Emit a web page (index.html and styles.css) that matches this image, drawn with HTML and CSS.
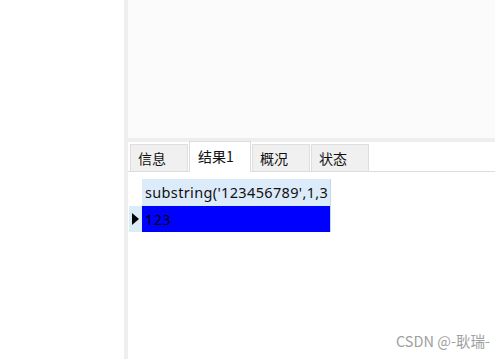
FILE: index.html
```html
<!DOCTYPE html>
<html>
<head>
<meta charset="utf-8">
<link rel="stylesheet" href="styles.css">
</head>
<body>
<div class="app">
  <div class="left"></div>
  <div class="divider"></div>
  <div class="right">
    <div class="top-pane"></div>
    <div class="hsep"></div>
    <div class="tabs">
      <div class="tab">信息</div>
      <div class="tab active">结果1</div>
      <div class="tab">概况</div>
      <div class="tab">状态</div>
    </div>
    <div class="grid">
      <div class="grid-row head">
        <div class="ind blank"></div>
        <div class="cell hcell">substring('123456789',1,3</div>
      </div>
      <div class="grid-row">
        <div class="ind"><svg width="7" height="12" viewBox="0 0 7 12"><polygon points="0,0 7,6 0,12" fill="#000"/></svg></div>
        <div class="cell sel">123</div>
      </div>
    </div>
    <div class="watermark">CSDN @-耿瑞-</div>
  </div>
</div>
</body>
</html>
```
FILE: styles.css
```css
html, body {
  margin: 0;
  padding: 0;
  background: #fff;
}
body {
  font-family: "Noto Sans", "Noto Sans CJK SC", sans-serif;
}
.app {
  display: flex;
  width: 495px;
  height: 359px;
  overflow: hidden;
}
.left {
  width: 124px;
  background: #fff;
}
.divider {
  width: 4px;
  background: #efefef;
}
.right {
  flex: 1;
  display: flex;
  flex-direction: column;
  position: relative;
  background: #fff;
}
.top-pane {
  height: 138px;
  background: #fbfbfb;
}
.hsep {
  height: 4px;
  background: #eeeeee;
}
.tabs {
  display: flex;
  align-items: flex-end;
  height: 29px;
  padding-left: 2px;
  border-bottom: 1px solid #dddddd;
}
.tab {
  box-sizing: border-box;
  width: 58px;
  height: 27px;
  padding-left: 7px;
  font-family: "Noto Sans CJK SC", sans-serif;
  font-size: 14px;
  line-height: 26px;
  color: #111;
  background: #f0f0f0;
  border: 1px solid #dedede;
  border-bottom: none;
}
.tab + .tab {
  margin-left: 1px;
}
.tab.active {
  width: 62px;
  height: 31px;
  line-height: 28px;
  padding-left: 8px;
  background: #fff;
  margin-bottom: -1px;
}
.grid {
  margin-top: 7px;
  padding-left: 1px;
  display: flex;
  flex-direction: column;
}
.grid-row {
  display: flex;
}
.ind {
  width: 13px;
  background: #dcebf8;
  display: flex;
  align-items: center;
  justify-content: center;
}
.ind.blank {
  background: #fff;
}
.cell {
  box-sizing: border-box;
  width: 189px;
  padding-left: 3px;
  font-size: 14.5px;
  letter-spacing: 0.35px;
  color: #111;
  white-space: nowrap;
  overflow: hidden;
}
.hcell {
  height: 27px;
  line-height: 27px;
  background: #dcebfa;
  border-right: 1px solid #c9d6e3;
}
.sel {
  height: 26px;
  line-height: 26px;
  background: #0000ff;
  color: #000;
  border-right: 1px solid #c9d6e3;
}
.watermark {
  position: absolute;
  right: 5px;
  bottom: 8px;
  font-size: 14.5px;
  line-height: 20px;
  color: #a0a0a0;
  font-family: "Noto Sans CJK SC", sans-serif;
}
```
